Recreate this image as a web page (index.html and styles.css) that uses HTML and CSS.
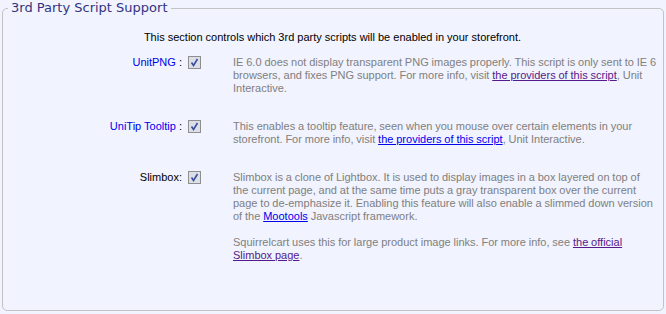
FILE: index.html
```html
<!DOCTYPE html>
<html lang="en">
<head>
    <meta charset="UTF-8">
    <title>3rd Party Script Support</title>
    <link rel="stylesheet" href="styles.css">
</head>
<body>
    <fieldset class="panel">
        <legend>3rd Party Script Support</legend>
        <p class="intro">This section controls which 3rd party scripts will be enabled in your storefront.</p>

        <div class="options">
            <div class="label"><span class="name">UnitPNG</span> :</div>
            <div class="check"><span class="box"><svg viewBox="0 0 13 13" width="13" height="13"><path d="M3.5 6.5 L5.5 9.5 L9.5 3" fill="none" stroke="#3b4f9e" stroke-width="1.6"/></svg></span></div>
            <div class="desc">
                <p>IE 6.0 does not display transparent PNG images properly. This script is only sent to IE 6 browsers, and fixes PNG support. For more info, visit <a class="visited" href="#">the providers of this script</a>, Unit Interactive.</p>
            </div>

            <div class="label"><span class="name">UniTip Tooltip</span> :</div>
            <div class="check"><span class="box"><svg viewBox="0 0 13 13" width="13" height="13"><path d="M3.5 6.5 L5.5 9.5 L9.5 3" fill="none" stroke="#3b4f9e" stroke-width="1.6"/></svg></span></div>
            <div class="desc">
                <p>This enables a tooltip feature, seen when you mouse over certain elements in your storefront. For more info, visit <a href="#">the providers of this script</a>, Unit Interactive.</p>
            </div>

            <div class="label">Slimbox:</div>
            <div class="check"><span class="box"><svg viewBox="0 0 13 13" width="13" height="13"><path d="M3.5 6.5 L5.5 9.5 L9.5 3" fill="none" stroke="#3b4f9e" stroke-width="1.6"/></svg></span></div>
            <div class="desc">
                <p>Slimbox is a clone of Lightbox. It is used to display images in a box layered on top of the current page, and at the same time puts a gray transparent box over the current page to de-emphasize it. Enabling this feature will also enable a slimmed down version of the <a href="#">Mootools</a> Javascript framework.</p>
                <p>Squirrelcart uses this for large product image links. For more info, see <a class="visited" href="#">the official Slimbox page</a>.</p>
            </div>
        </div>
    </fieldset>
</body>
</html>
```

FILE: styles.css
```css
body {
    margin: 0;
    background-color: #f1f3fe;
    font-family: "Liberation Sans", Tahoma, sans-serif;
    font-size: 11px;
    line-height: 13px;
    color: #000;
}
.panel {
    margin: 0 2px;
    padding: 0 5px 0 0;
    height: 311px;
    box-sizing: border-box;
    border: 1px solid #c3c3c3;
    border-radius: 5px;
    min-width: 0;
}
.panel legend {
    margin-left: 5px;
    padding: 0 3px;
    font-family: "DejaVu Sans", Tahoma, sans-serif;
    font-size: 13px;
    line-height: 16px;
    color: #33337f;
}
.intro {
    margin: 15px 0 12px 4px;
    text-align: center;
}
.options {
    display: grid;
    grid-template-columns: 183px 47px 1fr;
    row-gap: 25px;
}
.label {
    text-align: right;
    padding-right: 4px;
}
.label .name {
    color: #0000ee;
}
.check {
    padding-left: 2px;
}
.box {
    display: block;
    width: 11px;
    height: 11px;
    border: 1px solid #8e8f8f;
    background: #dcdfe8;
    position: relative;
}
.box svg {
    position: absolute;
    left: -1px;
    top: -1px;
}
.desc {
    max-width: 423.5px;
    color: #808080;
    word-spacing: -0.2px;
}
.desc p {
    margin: 0 0 13px;
}
.desc p:last-child {
    margin-bottom: 0;
}
.desc a {
    color: #0000ee;
}
.desc a.visited {
    color: #551a8b;
}
```
